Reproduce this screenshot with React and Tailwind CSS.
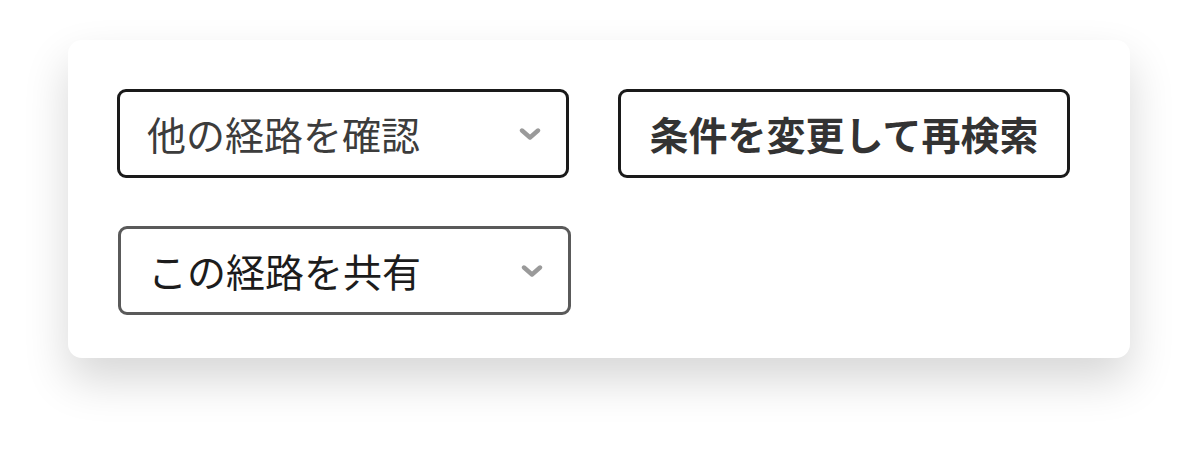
import React from "react";

function Chevron() {
  return (
    <svg width="22" height="14" viewBox="0 0 22 14" className="shrink-0">
      <path d="M3 3.5 L11 10.5 L19 3.5" fill="none" stroke="#9a9a9a" strokeWidth="4.4" strokeLinecap="round" strokeLinejoin="round" />
    </svg>
  );
}

function SelectBox({ label, className, textClass }) {
  return (
    <div className={`flex items-center justify-between h-[89px] pl-[27px] pr-[25px] rounded-[9px] border-[3px] bg-white ${className}`}>
      <span className={`text-[39px] leading-none ${textClass}`}>{label}</span>
      <Chevron />
    </div>
  );
}

export default function App() {
  return (
    <div
      className="w-full min-h-[456px] bg-white pt-[40px] pl-[68px]"
      style={{ fontFamily: '"Noto Sans CJK JP", "Noto Sans", sans-serif' }}
    >
      <div className="w-[1062px] h-[318px] rounded-[14px] bg-white pt-[49px] pl-[49px] shadow-[0_22px_45px_rgba(0,0,0,0.16)]">
        <div className="grid grid-cols-[452px_452px] gap-x-[49px] gap-y-[48px]">
          <SelectBox label="他の経路を確認" className="border-[#1a1a1a]" textClass="text-[#3c3c3c]" />
          <button className="flex items-center justify-center h-[89px] rounded-[9px] border-[3px] border-[#1a1a1a] bg-white">
            <span className="text-[39px] leading-none font-bold text-[#333333]">条件を変更して再検索</span>
          </button>
          <SelectBox label="この経路を共有" className="ml-px w-[453px] border-[#5a5a5a]" textClass="text-[#1c1c1c]" />
        </div>
      </div>
    </div>
  );
}
